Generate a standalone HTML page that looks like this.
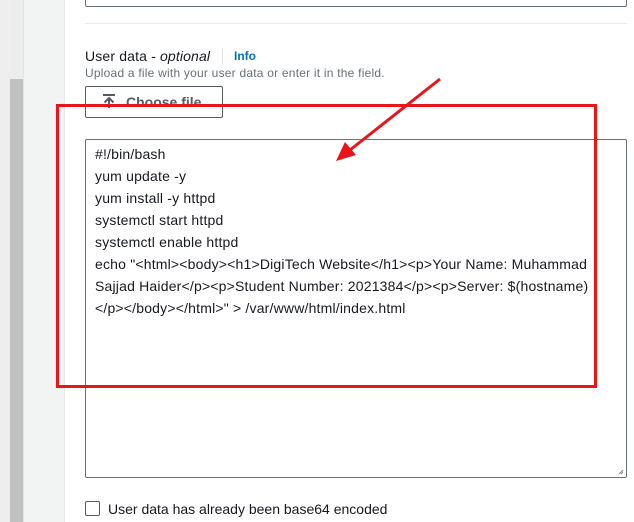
<!DOCTYPE html>
<html><head><meta charset="utf-8"><style>
body{margin:0;width:634px;height:522px;overflow:hidden;background:#fff;font-family:"Liberation Sans",sans-serif;position:relative}
div{position:absolute;box-sizing:border-box}
.t{white-space:pre;color:#16191f;font-size:14px;line-height:22px}
</style></head><body>
<div style="left:0;top:0;width:9px;height:522px;background:#eeeeee"></div>
<div style="left:9px;top:0;width:14px;height:522px;background:#ececec"></div>
<div style="left:10px;top:79px;width:13px;height:443px;background:#c1c1c1"></div>
<div style="left:23px;top:0;width:42px;height:522px;background:#f2f3f3;border-left:1px solid #e3e3e3;border-right:1px solid #e6e7e8"></div>
<div style="left:85px;top:-10px;width:542px;height:17px;border:1px solid #687078;border-radius:2px"></div>
<div style="left:85px;top:23px;width:542px;height:1px;background:#eaeded"></div>
<div class="t" style="left:85px;top:45px;font-size:14px;color:#16191f;letter-spacing:0.15px">User data - <i>optional</i></div>
<div style="left:222px;top:48px;width:1px;height:16px;background:#e0e0e0"></div>
<div style="left:234px;top:46px;font-size:12px;font-weight:bold;color:#0073bb;line-height:20px">Info</div>
<div style="left:85px;top:65px;font-size:12px;color:#687078;line-height:16px;white-space:pre;letter-spacing:0.22px">Upload a file with your user data or enter it in the field.</div>
<div style="left:85px;top:86px;width:138px;height:32px;border:1px solid #545b64;border-radius:2px"></div>
<svg style="position:absolute;left:101px;top:93px" width="16" height="16"><path d="M2 2H14M8 15V5M3.5 9.5L8 5L12.5 9.5" stroke="#545b64" stroke-width="2" fill="none"/></svg>
<div style="left:126px;top:93px;font-size:14px;font-weight:bold;color:#545b64;line-height:18px">Choose file</div>
<div style="left:85px;top:139px;width:542px;height:339px;border:1px solid #687078;border-radius:2px"></div>
<div class="t" style="left:95px;top:143px;letter-spacing:0.19px">#!/bin/bash
yum update -y
yum install -y httpd
systemctl start httpd
systemctl enable httpd
echo "&lt;html&gt;&lt;body&gt;&lt;h1&gt;DigiTech Website&lt;/h1&gt;&lt;p&gt;Your Name: Muhammad
Sajjad Haider&lt;/p&gt;&lt;p&gt;Student Number: 2021384&lt;/p&gt;&lt;p&gt;Server: $(hostname)
&lt;/p&gt;&lt;/body&gt;&lt;/html&gt;" &gt; /var/www/html/index.html</div>
<div style="left:56px;top:104px;width:541px;height:284px;border:3px solid #e8151b"></div>
<svg style="position:absolute;left:0;top:0" width="634" height="522"><line x1="440" y1="79" x2="350" y2="150" stroke="#e8151b" stroke-width="3"/><polygon points="336,161 345,142 356,155" fill="#e8151b"/><path d="M619 474L623 470M621 474L623 472" stroke="#888" stroke-width="1"/></svg>
<div style="left:85px;top:501px;width:15px;height:15px;border:1px solid #545b64;border-radius:2px"></div>
<div class="t" style="left:108px;top:498px">User data has already been base64 encoded</div>
</body></html>
